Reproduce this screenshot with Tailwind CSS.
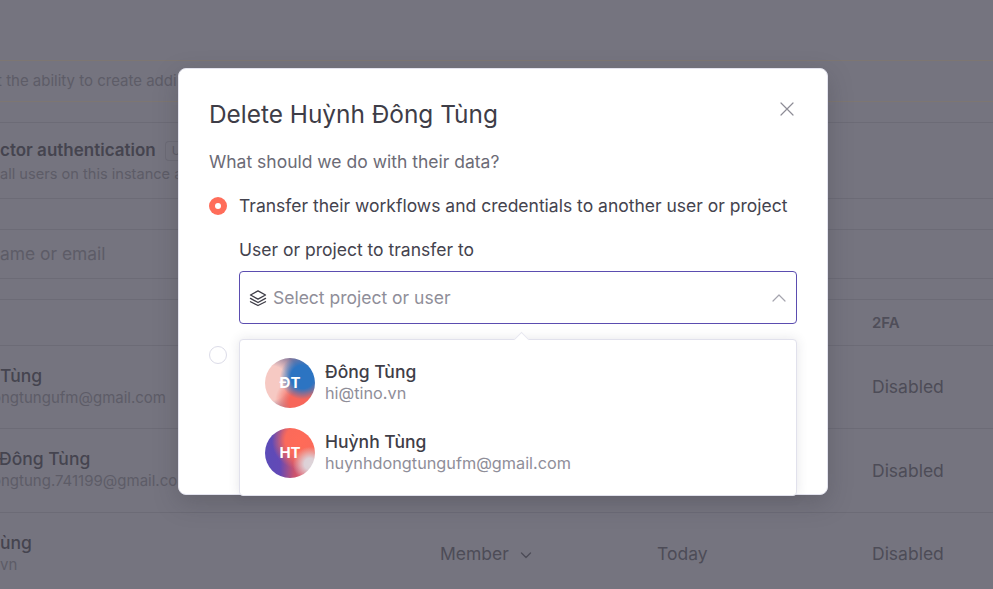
<!DOCTYPE html>
<html lang="en">
<head>
<meta charset="utf-8">
<title>Delete user</title>
<script src="https://cdn.jsdelivr.net/npm/@tailwindcss/browser@4"></script>
</head>
<body class="m-0 overflow-hidden">
<div class="relative w-[993px] h-[589px] overflow-hidden bg-[#75747f] font-['Inter',sans-serif] text-[#42414c]">
  <!-- dimmed page behind the modal -->
  <div class="flex flex-col h-full whitespace-nowrap">
    <div class="h-[60px] shrink-0"></div>
    <div class="h-[42px] shrink-0 flex items-center border-y border-[#7d7672] text-[15px] text-[#5d5c67]"><span class="-ml-[3px]">t the ability to create addi</span></div>
    <div class="h-[20px] shrink-0"></div>
    <div class="h-[77px] shrink-0 border-y border-[#6c6b76] pt-[16px]">
      <div class="flex items-center h-[24px]"><span class="font-semibold text-[17px] text-[#45444f]">ctor authentication</span><span class="ml-[9px] h-[20px] pl-[6px] w-[14px] overflow-hidden rounded-l border border-r-0 border-[#6c6b76] text-xs leading-[18px] text-[#5d5c67]">U</span></div>
      <div class="text-[14.6px] leading-[22px] text-[#5d5c67]">all users on this instance a</div>
    </div>
    <div class="h-[30px] shrink-0"></div>
    <div class="h-[50px] shrink-0 flex items-center border-y border-[#6c6b76] text-[17.4px] text-[#5d5c67]"><span>ame or email</span></div>
    <div class="h-[20px] shrink-0"></div>
    <div class="h-[47px] shrink-0 border-y border-[#6c6b76] grid grid-cols-[872px_1fr] items-center text-[15px] font-semibold text-[#4f4e59]"><span></span><span class="pt-[1px]">2FA</span></div>
    <div class="h-[83px] shrink-0 border-b border-[#6c6b76] grid grid-cols-[872px_1fr] items-center text-[17.5px]">
      <div class="pb-[1px]"><div class="font-medium leading-[22px] mb-[1px] text-[#45444f]">Tùng</div><div class="text-[15px] leading-[20px] -ml-[8px] text-[#5d5c67]">ongtungufm@gmail.com</div></div>
      <span class="pt-[1px] text-[#4d4c57]">Disabled</span>
    </div>
    <div class="h-[84px] shrink-0 border-b border-[#6c6b76] grid grid-cols-[872px_1fr] items-center text-[17.5px]">
      <div class="pb-[3px]"><div class="font-medium leading-[22px] mb-[1px] text-[#45444f] -ml-[1px]">Đông Tùng</div><div class="text-[15px] leading-[20px] -ml-[8px] text-[#5d5c67]">ongtung.741199@gmail.co</div></div>
      <span class="pt-[1px] text-[#4d4c57]">Disabled</span>
    </div>
    <div class="h-[83px] shrink-0 grid grid-cols-[440px_217px_215px_1fr] items-center text-[17.5px]">
      <div class="pb-[3px]"><div class="font-medium leading-[22px] mb-[1px] text-[#45444f]">ùng</div><div class="text-[15px] leading-[20px] text-[#5d5c67]">vn</div></div>
      <span class="flex items-center gap-[11px] text-[#4d4c57]">Member
        <svg class="w-[12px] h-[12px]" viewBox="0 0 12 12" fill="none" stroke="#4d4c57" stroke-width="1.3" stroke-linecap="round" stroke-linejoin="round"><path d="M1.5 4l4.5 4.5L10.5 4"/></svg>
      </span>
      <span class="text-[#4d4c57]">Today</span><span class="text-[#4d4c57]">Disabled</span>
    </div>
  </div>

  <!-- modal -->
  <div class="absolute left-[178px] top-[68px] w-[650px] h-[427px] bg-white rounded-lg border border-[#e3e3ee] shadow-[0_8px_24px_rgba(50,50,60,0.25)] pl-[30px] pr-[30px] text-[#44434e]">
    <div class="flex items-start justify-between pt-[28px]">
      <h1 class="text-[24.4px] leading-[34px] font-normal text-[#3e3d47]">Delete Huỳnh Đông Tùng</h1>
      <button class="mt-[5px] mr-[3px]" aria-label="Close">
        <svg class="block w-[14px] h-[14px]" viewBox="0 0 14 14" fill="none" stroke="#8d8c96" stroke-width="1.2" stroke-linecap="round"><path d="M1 1l12 12M13 1L1 13"/></svg>
      </button>
    </div>
    <p class="mt-[19px] text-[17.5px] leading-[24px] text-[#6c6b76]">What should we do with their data?</p>
    <div class="mt-[20px] flex items-center gap-[12px] h-[24px]">
      <span class="w-[18px] h-[18px] rounded-full bg-[#ff6d5a] flex items-center justify-center"><span class="w-[6px] h-[6px] rounded-full bg-white"></span></span>
      <span class="text-[17.5px] text-[#44434e]">Transfer their workflows and credentials to another user or project</span>
    </div>
    <div class="ml-[30px]">
      <div class="mt-[20px] text-[17.5px] leading-[24px] text-[#44434e]">User or project to transfer to</div>
      <div class="mt-[9px] h-[53px] rounded border border-[#5b4db0] flex items-center pl-[9px] pr-[10px]">
        <svg class="w-[18px] h-[18px] shrink-0" viewBox="0 0 24 24" fill="none" stroke="#3f3e48" stroke-width="1.8" stroke-linecap="round" stroke-linejoin="round"><path d="M12 2.5L2 8l10 5.5L22 8z"/><path d="M2 12.5l10 5.5 10-5.5"/><path d="M2 17l10 5 10-5"/></svg>
        <span class="ml-[6px] pt-[1px] text-[17.5px] text-[#8f8e99]">Select project or user</span>
        <svg class="ml-auto w-[14px] h-[14px]" viewBox="0 0 14 14" fill="none" stroke="#a5a4ae" stroke-width="1.2" stroke-linecap="round" stroke-linejoin="round"><path d="M1 10l6-6 6 6"/></svg>
      </div>
    </div>
    <div class="mt-[22px] w-[18px] h-[18px] rounded-full border border-[#dcdce8] bg-white"></div>
  </div>

  <!-- dropdown popper -->
  <div class="absolute left-[239px] top-[339px] w-[558px] h-[157px] bg-white rounded border border-[#e1e1ec] shadow-[0_0_12px_rgba(50,50,70,0.12)] pl-[25px]">
    <div class="absolute left-[276px] -top-[6px] w-[11px] h-[11px] rotate-45 bg-white border-l border-t border-[#e8e8f0]"></div>
    <div class="flex flex-col pt-[18px] gap-[20px]">
      <div class="flex items-center gap-[10px] h-[50px]">
        <div class="w-[50px] h-[50px] rounded-full flex items-center justify-center pt-[1px] text-white text-[15px] font-bold bg-[radial-gradient(circle_at_75%_38%,#2c74c2_0%,#2c74c2_24%,transparent_46%),radial-gradient(circle_at_72%_88%,#f7665a_0%,#f7665a_20%,transparent_46%),radial-gradient(circle_at_12%_50%,#f6c9c3_0%,#f6c9c3_34%,transparent_62%),linear-gradient(#85779a,#85779a)]">ĐT</div>
        <div class="pb-[2px]">
          <div class="text-[17.5px] font-medium leading-[22px] text-[#3f3e48]">Đông Tùng</div>
          <div class="text-[16.25px] leading-[20px] text-[#8f8e99]">hi@tino.vn</div>
        </div>
      </div>
      <div class="flex items-center gap-[10px] h-[50px]">
        <div class="w-[50px] h-[50px] rounded-full flex items-center justify-center pt-[1px] text-white text-[15px] font-bold bg-[radial-gradient(circle_at_90%_72%,#ddd5da_0%,#ddd0d6_10%,transparent_30%),radial-gradient(circle_at_72%_25%,#ff6b58_0%,#fb6a5a_30%,transparent_56%),linear-gradient(90deg,#5b4cb8_0%,#6349b6_30%,#c9536f_58%,#e35d6a_75%)]">HT</div>
        <div class="pb-[2px]">
          <div class="text-[17.5px] font-medium leading-[22px] text-[#3f3e48]">Huỳnh Tùng</div>
          <div class="text-[16.25px] leading-[20px] text-[#8f8e99]">huynhdongtungufm@gmail.com</div>
        </div>
      </div>
    </div>
  </div>
</div>
</body>
</html>
